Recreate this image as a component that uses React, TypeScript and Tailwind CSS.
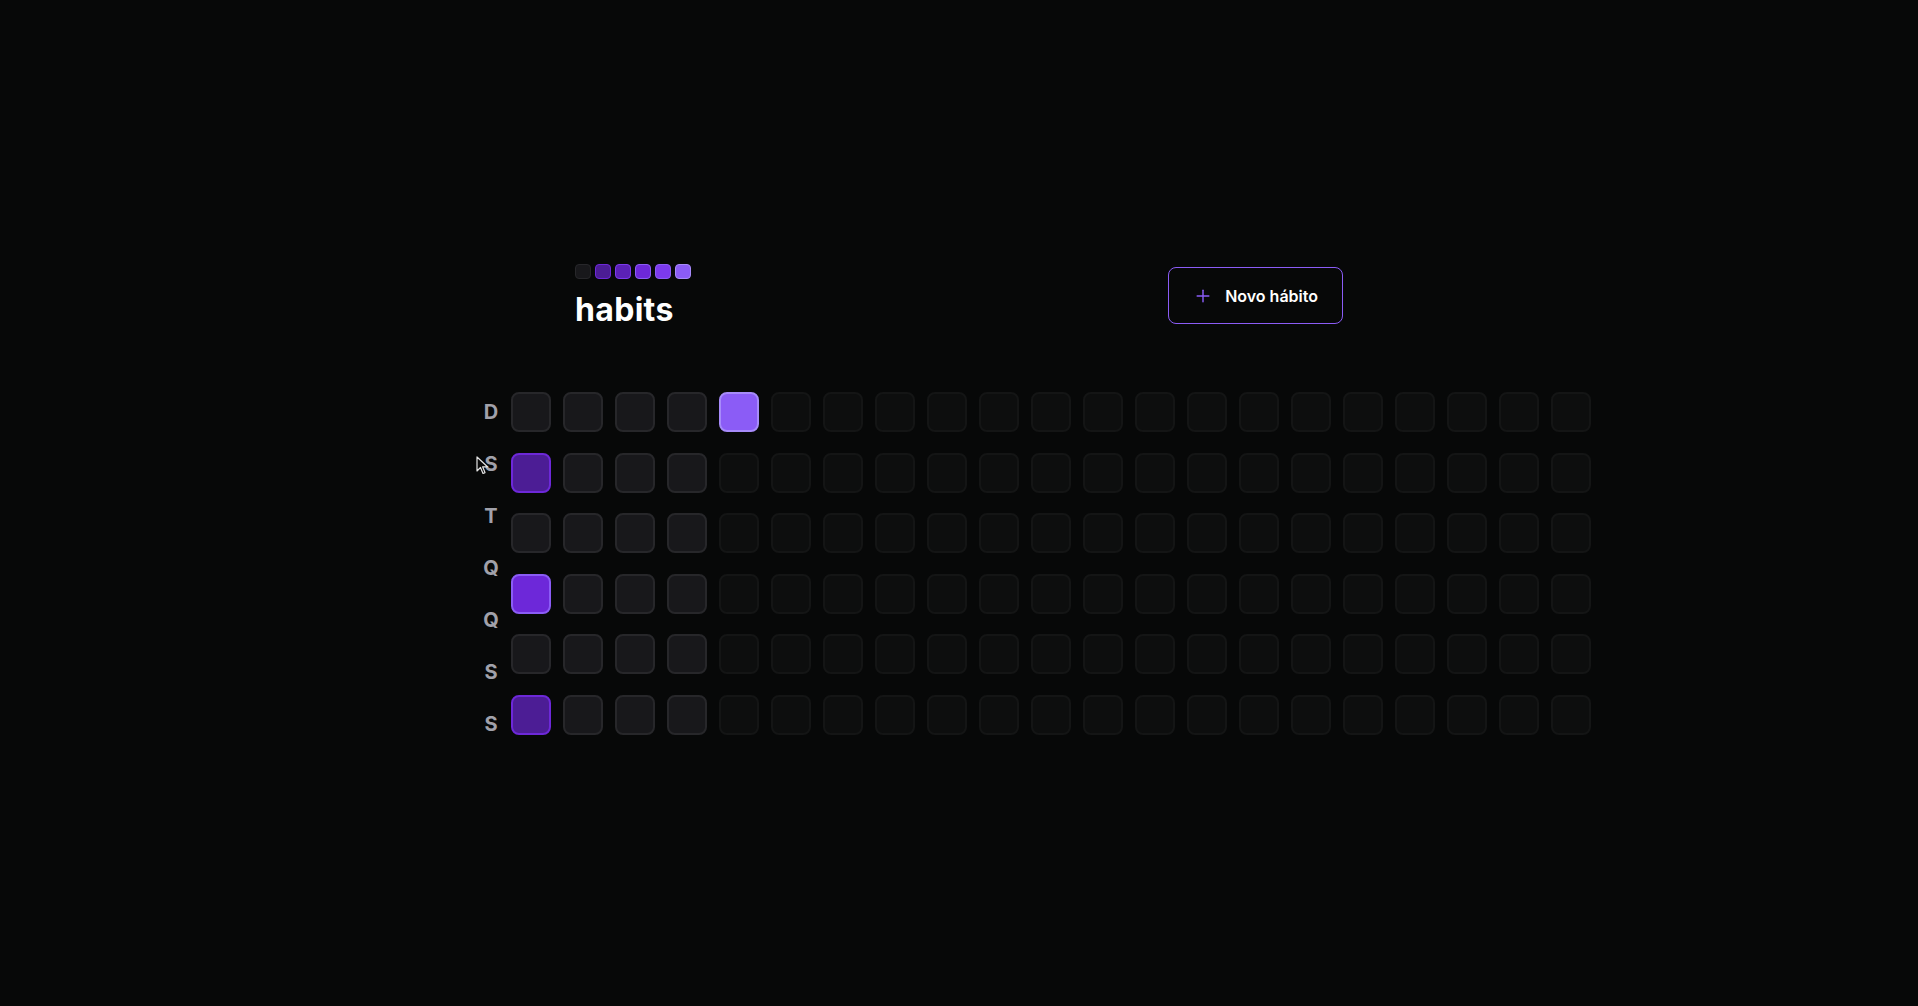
import React from 'react';
import { Plus } from 'lucide-react';

const weekDays = ['D', 'S', 'T', 'Q', 'Q', 'S', 'S'];

const logoSquares = [
  'bg-[#18181b] border-[#27272a]',
  'bg-[#4c1d95] border-[#6d28d9]',
  'bg-[#5b21b6] border-[#7c3aed]',
  'bg-[#6d28d9] border-[#8b5cf6]',
  'bg-[#7c3aed] border-[#8b5cf6]',
  'bg-[#8b5cf6] border-[#a78bfa]',
];

const COLUMNS = 21;
const ROWS = 6;

// which cells are filled, keyed by "row-col"
const filled: Record<string, string> = {
  '0-4': 'bg-[#8b5cf6] border-[#a78bfa]',
  '1-0': 'bg-[#4c1d95] border-[#6d28d9]',
  '3-0': 'bg-[#6d28d9] border-[#8b5cf6]',
  '5-0': 'bg-[#4c1d95] border-[#6d28d9]',
};

function cellClass(row: number, col: number) {
  const key = `${row}-${col}`;
  if (filled[key]) return filled[key];
  if (col < 4) return 'bg-[#18181b] border-[#27272a]';
  return 'bg-[#0d0e0e] border-[#141515]';
}

function Logo() {
  return (
    <div className="flex flex-col">
      <div className="flex gap-1">
        {logoSquares.map((c, i) => (
          <div key={i} className={`w-4 h-[15px] rounded-[4px] border ${c}`} />
        ))}
      </div>
      <span className="mt-[15px] text-[32px] leading-[32px] font-bold text-white tracking-[0.01em]">habits</span>
    </div>
  );
}

function Header() {
  return (
    <header className="w-full max-w-3xl mx-auto flex items-start justify-between">
      <Logo />
      <button
        type="button"
        className="mt-[3px] h-[57px] border border-[#8b5cf6] rounded-lg px-6 flex items-center gap-3 font-semibold text-white text-base"
      >
        <Plus size={20} className="text-[#8b5cf6]" strokeWidth={1.75} />
        Novo hábito
      </button>
    </header>
  );
}

function SummaryTable() {
  const cells: React.ReactNode[] = [];
  for (let col = 0; col < COLUMNS; col++) {
    for (let row = 0; row < ROWS; row++) {
      cells.push(
        <div key={`${row}-${col}`} className={`w-10 h-10 rounded-lg border-2 ${cellClass(row, col)}`} />
      );
    }
  }

  return (
    <div className="mt-[66px] flex relative">
      <div className="grid grid-rows-7 gap-3 shrink-0">
        {weekDays.map((d, i) => (
          <div key={i} className="w-10 h-10 flex items-center justify-center text-xl font-bold text-[#a1a1aa]">
            {d}
          </div>
        ))}
      </div>
      <div className="grid grid-rows-6 grid-flow-col gap-x-3 gap-y-[20.6px] shrink-0 self-start">
        {cells}
      </div>
      {/* mouse pointer visible in the capture */}
      <svg className="absolute left-[5px] top-[64px]" width="13" height="19" viewBox="0 0 13 19">
        <path d="M1 1 L1 15 L4.5 11.5 L7 17.5 L9 16.6 L6.6 10.8 L11.5 10.8 Z" fill="#0a0a0a" stroke="#e5e5e5" strokeWidth="1.2" strokeLinejoin="round" />
      </svg>
    </div>
  );
}

export default function App() {
  return (
    <div className="min-h-screen bg-[#070808] text-white font-['Inter',sans-serif] overflow-hidden">
      <div className="w-full max-w-5xl mx-auto px-6 pt-[264px] flex flex-col">
        <Header />
        <SummaryTable />
      </div>
    </div>
  );
}
